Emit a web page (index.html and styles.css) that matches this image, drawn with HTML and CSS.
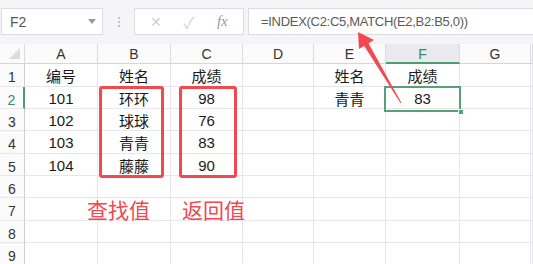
FILE: index.html
```html
<!DOCTYPE html>
<html>
<head>
<meta charset="utf-8">
<link rel="stylesheet" href="styles.css">
</head>
<body>
<div class="app">
  <div class="toolbar">
    <div class="namebox"><span>F2</span><span class="caret"></span></div>
    <div class="vdots"><i></i><i></i><i></i></div>
    <div class="fbtns">
      <span class="fb x">✕</span>
      <span class="fb ok">✓</span>
      <span class="fb fx">fx</span>
    </div>
    <div class="formula">=INDEX(C2:C5,MATCH(E2,B2:B5,0))</div>
  </div>
  <div class="sheet">
    <div class="c hd corner"><span class="tri"></span></div>
    <div class="c hd">A</div><div class="c hd">B</div><div class="c hd">C</div><div class="c hd">D</div><div class="c hd">E</div><div class="c hd sel">F</div><div class="c hd">G</div><div class="c hd"></div>

    <div class="c rh">1</div><div class="c">编号</div><div class="c">姓名</div><div class="c">成绩</div><div class="c"></div><div class="c">姓名</div><div class="c">成绩</div><div class="c"></div><div class="c"></div>
    <div class="c rh rsel">2</div><div class="c">101</div><div class="c">环环</div><div class="c">98</div><div class="c"></div><div class="c">青青</div><div class="c">83</div><div class="c"></div><div class="c"></div>
    <div class="c rh">3</div><div class="c">102</div><div class="c">球球</div><div class="c">76</div><div class="c"></div><div class="c"></div><div class="c"></div><div class="c"></div><div class="c"></div>
    <div class="c rh">4</div><div class="c">103</div><div class="c">青青</div><div class="c">83</div><div class="c"></div><div class="c"></div><div class="c"></div><div class="c"></div><div class="c"></div>
    <div class="c rh">5</div><div class="c">104</div><div class="c">藤藤</div><div class="c">90</div><div class="c"></div><div class="c"></div><div class="c"></div><div class="c"></div><div class="c"></div>
    <div class="c rh">6</div><div class="c"></div><div class="c"></div><div class="c"></div><div class="c"></div><div class="c"></div><div class="c"></div><div class="c"></div><div class="c"></div>
    <div class="c rh">7</div><div class="c note n1">查找值</div><div class="c"></div><div class="c note n2">返回值</div><div class="c"></div><div class="c"></div><div class="c"></div><div class="c"></div><div class="c"></div>
    <div class="c rh">8</div><div class="c"></div><div class="c"></div><div class="c"></div><div class="c"></div><div class="c"></div><div class="c"></div><div class="c"></div><div class="c"></div>
    <div class="c rh">9</div><div class="c"></div><div class="c"></div><div class="c"></div><div class="c"></div><div class="c"></div><div class="c"></div><div class="c"></div><div class="c"></div>
  </div>

  <div class="redbox rb1"></div>
  <div class="redbox rb2"></div>
  <div class="selbox"><span class="handle"></span></div>
  <svg class="arrow" width="533" height="264" viewBox="0 0 533 264">
    <polygon points="358,32 359,49 374,40" fill="#f2484f"/>
    <polygon points="368.2,42.7 363.8,45.3 400.6,103.3 401.4,102.7" fill="#f2484f"/>
  </svg>
</div>
</body>
</html>
```

FILE: styles.css
```css
* { box-sizing: border-box; }
html, body { margin: 0; padding: 0; background: #fff; }
body { width: 533px; height: 264px; overflow: hidden; font-family: "Liberation Sans", "Noto Sans CJK SC", sans-serif; }
.app { position: relative; width: 533px; height: 264px; overflow: hidden; }

.toolbar { height: 44px; background: #f5f5f7; display: flex; align-items: flex-start; padding-top: 8px; padding-left: 1px; }
.namebox { width: 102px; height: 27px; background: #fff; border: 1px solid #dcdcdf; display: flex; align-items: center; justify-content: space-between; padding: 0 6px 0 8px; font-size: 14px; color: #555; }
.caret { width: 0; height: 0; border-left: 4px solid transparent; border-right: 4px solid transparent; border-top: 5px solid #9a9a9a; }
.vdots { width: 31px; height: 27px; display: flex; flex-direction: column; align-items: center; justify-content: center; gap: 2px; }
.vdots i { display: block; width: 2px; height: 2px; background: #c4c4c4; }
.fbtns { width: 110px; height: 27px; background: #fff; border: 1px solid #dcdcdf; display: flex; align-items: center; justify-content: space-around; padding: 0 4px; }
.fb { font-size: 14px; color: #d0d0d0; width: 28px; text-align: center; }
.fb.ok { font-size: 16px; color: #d4d4d4; }
.fb.fx { font-family: "Liberation Serif", serif; font-style: italic; color: #9a9a9a; font-size: 15px; }
.formula { margin-left: 4px; flex: 1; height: 27px; background: #fff; border: 1px solid #dcdcdf; border-right: none; font-size: 13px; color: #5a5a5a; line-height: 25px; padding-left: 12px; letter-spacing: -0.3px; white-space: nowrap; }

.sheet { display: grid; grid-template-columns: 25px 73px 73px 72px 71px 72px 74px 71px 1fr; grid-template-rows: 20px 23px 22px 22px 23px 22px 22px 23px 22px 22px; }
.c { border-right: 1px solid #e6e6ec; border-bottom: 1px solid #e6e6ec; display: flex; align-items: center; justify-content: center; font-size: 15px; color: #1a1a1a; padding-top: 1px; white-space: nowrap; min-width: 0; }
.hd { background: #fbfbfb; border-right-color: #dcdce0; border-bottom-color: #d6d6da; font-size: 14px; color: #333; }
.hd.sel { background: #e9e9ee; border-bottom: 2px solid #4c9e6e; color: #3a8a5c; }
.corner { position: relative; }
.tri { position: absolute; right: 4px; bottom: 4px; width: 0; height: 0; border-left: 11px solid transparent; border-bottom: 11px solid #dcdcdc; }
.rh { background: #fbfbfb; border-right-color: #cfcfd4; font-size: 14px; color: #333; padding-top: 4px; }
.rh.rsel { border-right: 2px solid #4c9e6e; color: #3a8a5c; }
.note { color: #f2484f; font-size: 21px; justify-content: flex-start; padding-top: 0; overflow: visible; position: relative; z-index: 1; }
.n1 { padding-left: 62px; }
.n2 { padding-left: 11px; }

.redbox { position: absolute; top: 86px; height: 92px; border: 3px solid #f2484f; border-radius: 3px; }
.rb1 { left: 99px; width: 65px; }
.rb2 { left: 179px; width: 58px; }
.selbox { position: absolute; left: 384px; top: 86px; width: 77px; height: 26px; border: 2px solid #55a375; }
.handle { position: absolute; right: -5px; bottom: -5px; width: 6px; height: 6px; background: #55a375; border: 1px solid #fff; }
.arrow { position: absolute; left: 0; top: 0; }
```
